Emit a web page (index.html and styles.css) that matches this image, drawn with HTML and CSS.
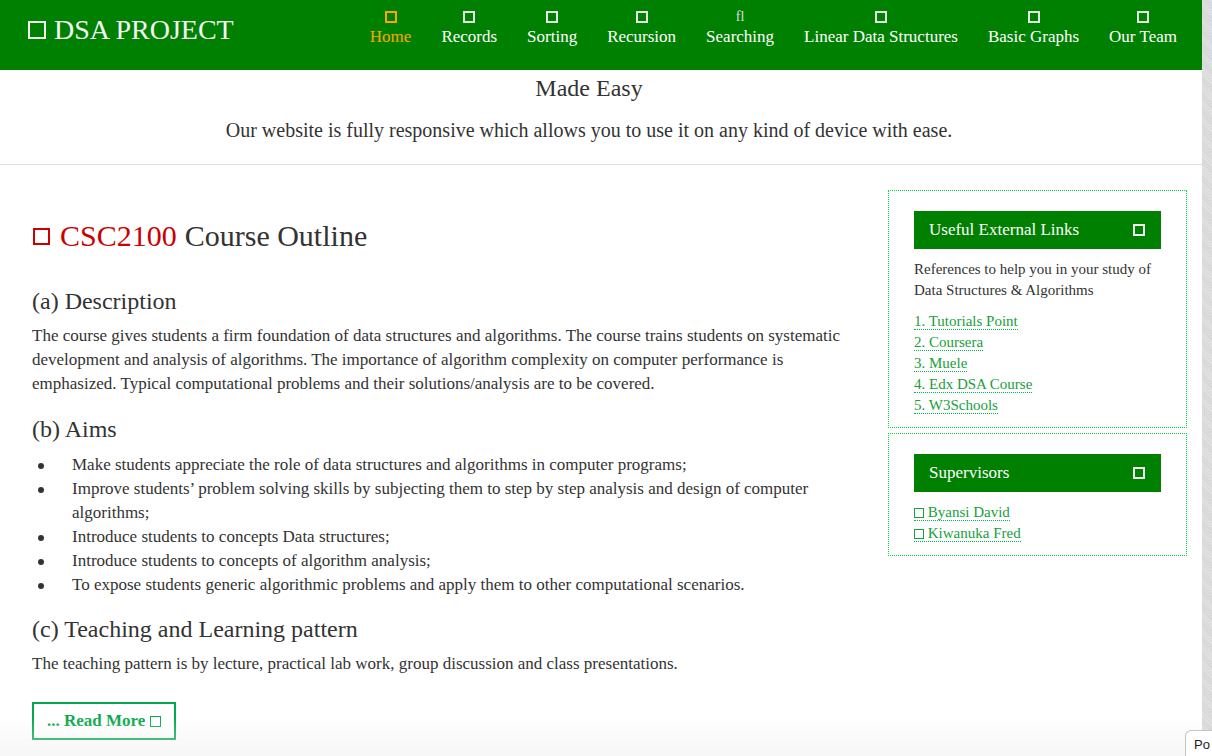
FILE: index.html
```html
<!DOCTYPE html>
<html lang="en">
<head>
<meta charset="utf-8">
<title>DSA Project</title>
<link rel="stylesheet" href="styles.css">
</head>
<body>
<div class="page">
  <header class="topbar">
    <a class="brand" href="#"><span class="sq sq-logo"></span>DSA PROJECT</a>
    <nav class="nav">
      <a class="nav-item active" href="#"><span class="sq sq-nav"></span><span class="nav-label">Home</span></a>
      <a class="nav-item" href="#"><span class="sq sq-nav"></span><span class="nav-label">Records</span></a>
      <a class="nav-item" href="#"><span class="sq sq-nav"></span><span class="nav-label">Sorting</span></a>
      <a class="nav-item" href="#"><span class="sq sq-nav"></span><span class="nav-label">Recursion</span></a>
      <a class="nav-item" href="#"><span class="nav-glyph">fl</span><span class="nav-label">Searching</span></a>
      <a class="nav-item" href="#"><span class="sq sq-nav"></span><span class="nav-label">Linear Data Structures</span></a>
      <a class="nav-item" href="#"><span class="sq sq-nav"></span><span class="nav-label">Basic Graphs</span></a>
      <a class="nav-item" href="#"><span class="sq sq-nav"></span><span class="nav-label">Our Team</span></a>
    </nav>
  </header>

  <section class="banner">
    <h2 class="banner-title">Made Easy</h2>
    <p class="banner-sub">Our website is fully responsive which allows you to use it on any kind of device with ease.</p>
  </section>

  <div class="content">
    <main class="main">
      <h1 class="course-title"><span class="sq sq-red"></span><span class="code">CSC2100</span> Course Outline</h1>

      <h3 class="sec-title first">(a) Description</h3>
      <p class="text">The course gives students a firm foundation of data structures and algorithms. The course trains students on systematic development and analysis of algorithms. The importance of algorithm complexity on computer performance is emphasized. Typical computational problems and their solutions/analysis are to be covered.</p>

      <h3 class="sec-title">(b) Aims</h3>
      <ul class="aims">
        <li>Make students appreciate the role of data structures and algorithms in computer programs;</li>
        <li>Improve students’ problem solving skills by subjecting them to step by step analysis and design of computer algorithms;</li>
        <li>Introduce students to concepts Data structures;</li>
        <li>Introduce students to concepts of algorithm analysis;</li>
        <li>To expose students generic algorithmic problems and apply them to other computational scenarios.</li>
      </ul>

      <h3 class="sec-title sec-c">(c) Teaching and Learning pattern</h3>
      <p class="text">The teaching pattern is by lecture, practical lab work, group discussion and class presentations.</p>

      <a class="read-more" href="#">... Read More <span class="sq sq-btn"></span></a>
    </main>

    <aside class="sidebar">
      <div class="widget">
        <div class="widget-head"><span>Useful External Links</span><span class="sq sq-head"></span></div>
        <p class="widget-text">References to help you in your study of Data Structures &amp; Algorithms</p>
        <ul class="links">
          <li><a href="#">1. Tutorials Point</a></li>
          <li><a href="#">2. Coursera</a></li>
          <li><a href="#">3. Muele</a></li>
          <li><a href="#">4. Edx DSA Course</a></li>
          <li><a href="#">5. W3Schools</a></li>
        </ul>
      </div>
      <div class="widget">
        <div class="widget-head"><span>Supervisors</span><span class="sq sq-head"></span></div>
        <ul class="links sup">
          <li><a href="#"><span class="sq sq-link"></span> Byansi David</a></li>
          <li><a href="#"><span class="sq sq-link"></span> Kiwanuka Fred</a></li>
        </ul>
      </div>
    </aside>
  </div>
</div>
<div class="fade"></div>
<div class="peek">Po</div>
</body>
</html>
```

FILE: styles.css
```css
html {
  background: #dadada;
  background-image: repeating-linear-gradient(45deg, #d6d6d6 0 1px, #e2e2e2 1px 2px);
}
body {
  margin: 0;
  font-family: "Liberation Serif", "Times New Roman", serif;
  color: #333;
}
a { text-decoration: none; }

.page {
  width: 1202px;
  min-height: 756px;
  background: #fff;
}

.sq {
  display: inline-block;
  box-sizing: border-box;
  border: 2px solid currentColor;
  flex: none;
}

/* header */
.topbar {
  height: 70px;
  background: #008000;
  display: flex;
  justify-content: space-between;
  align-items: flex-start;
  padding: 0 10px 0 28px;
}
.brand {
  display: flex;
  align-items: center;
  gap: 8px;
  color: #f4f4f4;
  font-size: 28px;
  height: 60px;
}
.sq-logo { width: 18px; height: 18px; color: #f0f0f0; }

.nav { display: flex; }
.nav-item {
  display: flex;
  flex-direction: column;
  align-items: center;
  padding: 10px 15px 0;
  color: #fff;
  font-size: 17px;
}
.nav-item.active { color: #ffa500; }
.sq-nav { width: 12px; height: 12px; margin-top: 1px; margin-bottom: 4px; color: #e6e6e6; }
.nav-item.active .sq-nav { color: #ffa500; }
.nav-glyph {
  height: 17px;
  font-size: 14px;
  line-height: 14px;
  color: #ddd;
}
.nav-label { line-height: 20px; }

/* banner */
.banner {
  text-align: center;
  padding: 4px 24px 22px 0;
  border-bottom: 1px solid #dddddd;
}
.banner-title {
  margin: 0;
  font-weight: normal;
  font-size: 24px;
  line-height: 28px;
  color: #333;
}
.banner-sub {
  margin: 16px 0 0;
  font-size: 20px;
  line-height: 24px;
  color: #333;
}

/* content */
.content {
  display: flex;
  gap: 28px;
  padding: 0 15px 0 32px;
}
.main {
  flex: 1;
  padding-top: 53px;
  padding-bottom: 20px;
}
.course-title {
  margin: 0;
  font-weight: normal;
  font-size: 30px;
  line-height: 36px;
  color: #333;
  display: flex;
  align-items: center;
}
.sq-red { width: 17px; height: 17px; color: #cc0000; margin: 0 10px 0 1px; }
.code { color: #cc0000; margin-right: 8px; }

.sec-title {
  margin: 18px 0 0;
  font-weight: normal;
  font-size: 24px;
  line-height: 30px;
  color: #333;
}
.sec-title.first { margin-top: 32px; }
.sec-title.sec-c { margin-top: 17px; }
.text {
  margin: 8px 0 0;
  font-size: 17px;
  line-height: 24px;
}
.aims {
  list-style: none;
  margin: 9px 0 0;
  padding: 0;
  font-size: 17px;
  line-height: 24px;
}
.aims li { padding-left: 40px; }
.aims li::before {
  content: "";
  display: inline-block;
  width: 6px;
  height: 6px;
  border-radius: 50%;
  background: #333;
  margin-left: -34px;
  margin-right: 28px;
  vertical-align: middle;
}

.read-more {
  display: inline-flex;
  align-items: center;
  gap: 5px;
  margin-top: 26px;
  border: 2px solid #00a84f;
  padding: 7px 13px;
  font-size: 17px;
  line-height: 20px;
  font-weight: bold;
  color: #0aa84a;
}
.sq-btn { width: 11px; height: 11px; border-width: 1.5px; }

/* sidebar */
.sidebar {
  width: 299px;
  flex: none;
  padding-top: 25px;
  display: flex;
  flex-direction: column;
  gap: 5px;
}
.widget {
  border: 1px dotted #00d84a;
  padding: 20px 25px 11px;
}
.widget-head {
  height: 38px;
  background: #008000;
  color: #fff;
  font-size: 17px;
  display: flex;
  align-items: center;
  justify-content: space-between;
  padding: 0 16px 0 15px;
}
.sq-head { width: 12px; height: 12px; color: #f0f0f0; }
.widget-text {
  margin: 10px 0 0;
  font-size: 15px;
  line-height: 21px;
  color: #333;
}
.links {
  list-style: none;
  margin: 10px 0 0;
  padding: 0;
  font-size: 15px;
  line-height: 21px;
}
.links a {
  color: #17a03c;
  border-bottom: 1px dotted #00b848;
}
.sq-link { width: 10px; height: 10px; border-width: 1.5px; vertical-align: -1px; color: #17a03c; }

/* overlays */
.fade {
  position: fixed;
  left: 0;
  bottom: 0;
  width: 1202px;
  height: 40px;
  background: linear-gradient(rgba(240,240,240,0), rgba(238,238,238,0.5));
  pointer-events: none;
}
.peek {
  position: fixed;
  left: 1185px;
  top: 730px;
  width: 27px;
  height: 30px;
  box-sizing: border-box;
  background: #fff;
  border: 1px solid #c4c4c4;
  border-right: 0;
  border-radius: 6px 0 0 0;
  padding: 6px 0 0 8px;
  font-family: "Liberation Sans", Arial, sans-serif;
  font-size: 13px;
  line-height: 16px;
  color: #222;
  white-space: nowrap;
  overflow: hidden;
}
```
